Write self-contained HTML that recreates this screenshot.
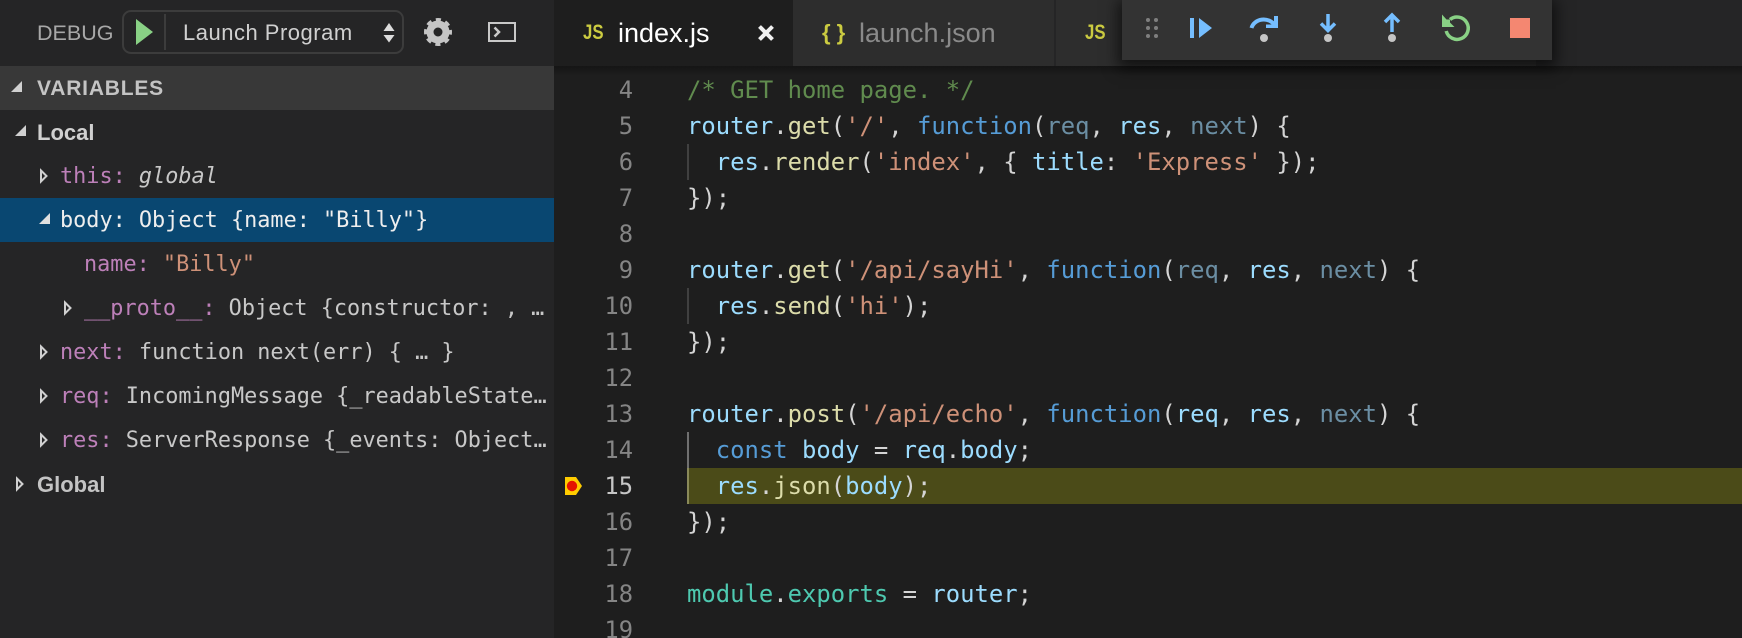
<!DOCTYPE html>
<html><head><meta charset="utf-8"><style>
html,body{margin:0;padding:0;background:#1e1e1e}
#r{position:relative;width:1742px;height:638px;overflow:hidden;background:#1e1e1e}
.a{position:absolute}
.s{font-family:"Liberation Sans",sans-serif;white-space:pre}
.m{font-family:"DejaVu Sans Mono","Liberation Mono",monospace;white-space:pre}
.row{position:absolute;font-size:21.85px;line-height:44px;height:44px;color:#c8c8c8;margin-top:1px}
.row i{font-style:normal;color:#bd80b9}
.l{position:absolute;left:687px;font-size:23.88px;line-height:36px;height:36px;color:#d4d4d4}
.n{position:absolute;left:583px;width:50px;text-align:right;font-size:23.76px;line-height:36px;color:#858585}
.v{color:#9cdcfe}.f{color:#dcdcaa}.t{color:#ce9178}.k{color:#569cd6}.d{color:#6b8ea3}.c{color:#608b4e}.e{color:#4ec9b0}
svg{position:absolute;overflow:visible}
.js{font-size:21px;line-height:26px;font-weight:bold;color:#cbcb41;transform:scaleX(.8);transform-origin:0 50%}
</style></head><body><div id="r">
<div class="a" style="left:0;top:0;width:554px;height:638px;background:#252526"></div>
<div class="a" style="left:0;top:66px;width:554px;height:44px;background:#383838"></div>
<div class="a" style="left:0;top:198px;width:554px;height:44px;background:#094771"></div>

<div class="a s" style="left:37px;top:19px;font-size:21.5px;line-height:28px;color:#a8a8a8">DEBUG</div>
<div class="a" style="left:122px;top:10px;width:278px;height:40px;border:2px solid #3c3c3c;border-radius:9px"></div>
<svg style="left:0;top:0" width="554" height="66">
<path d="M136 19L153 32L136 45Z" fill="#89d185"/>
<rect x="164" y="14" width="2" height="36" fill="#3c3c3c"/>
<path d="M389 23L394.500 31H383.500Z M383.500 35H394.500L389 42.500Z" fill="#dcdcdc"/>
<circle cx="438" cy="32" r="8" fill="none" stroke="#c5c5c5" stroke-width="7"/>
<circle cx="438" cy="32" r="12" fill="none" stroke="#c5c5c5" stroke-width="4" stroke-dasharray="5 4.425" stroke-dashoffset="2.500"/>
<rect x="489" y="23" width="26" height="18" fill="none" stroke="#c8c8c8" stroke-width="2"/>
<path d="M494.500 27.500L499 32L494.500 36.500" fill="none" stroke="#c8c8c8" stroke-width="2.500"/>
</svg>
<div class="a s" style="left:183px;top:19px;font-size:22px;line-height:28px;color:#d0d0d0;letter-spacing:.5px">Launch Program</div>

<div class="a s" style="left:37px;top:67px;font-size:21px;line-height:44px;font-weight:bold;color:#c4c4c4;letter-spacing:.8px">VARIABLES</div>
<div class="a s" style="left:37px;top:111px;font-size:22px;line-height:44px;font-weight:bold;color:#d0d0d0">Local</div>
<div class="a s" style="left:37px;top:463px;font-size:22px;line-height:44px;font-weight:bold;color:#c4c4c4">Global</div>

<svg style="left:0;top:0" width="554" height="520">
<path d="M11 92H22V81Z" fill="#d0d0d0"/>
<path d="M15 136H26V125Z" fill="#d0d0d0"/>
<path d="M39 224H50V213Z" fill="#e0e0e0"/>
<g fill="none" stroke="#d0d0d0" stroke-width="2">
<path d="M41 170.500L46.500 176L41 181.500Z"/>
<path d="M65 302.500L70.500 308L65 313.500Z"/>
<path d="M41 346.500L46.500 352L41 357.500Z"/>
<path d="M41 390.500L46.500 396L41 401.500Z"/>
<path d="M41 434.500L46.500 440L41 445.500Z"/>
<path d="M17 478.500L22.500 484L17 489.500Z"/>
</g>
</svg>

<div class="row m" style="left:60px;top:154px"><i>this:</i> <span style="font-style:italic">global</span></div>
<div class="row m" style="left:60px;top:198px;color:#eee">body: Object {name: "Billy"}</div>
<div class="row m" style="left:84px;top:242px"><i>name:</i> <span style="color:#ce9178">"Billy"</span></div>
<div class="row m" style="left:84px;top:286px"><i>__proto__:</i> Object {constructor: , …</div>
<div class="row m" style="left:60px;top:330px"><i>next:</i> function next(err) { … }</div>
<div class="row m" style="left:60px;top:374px"><i>req:</i> IncomingMessage {_readableState…</div>
<div class="row m" style="left:60px;top:418px"><i>res:</i> ServerResponse {_events: Object…</div>

<div class="a" style="left:554px;top:0;width:1188px;height:66px;background:#252526"></div>
<div class="a" style="left:554px;top:66px;width:1188px;height:10px;background:linear-gradient(#151515,#1e1e1e)"></div>
<div class="a" style="left:554px;top:0;width:239px;height:66px;background:#1e1e1e"></div>
<div class="a" style="left:793px;top:0;width:261px;height:66px;background:#2d2d2d"></div>
<div class="a" style="left:1056px;top:0;width:480px;height:66px;background:#2d2d2d"></div>

<div class="a s js" style="left:583px;top:20px">JS</div>
<div class="a s" style="left:618px;top:17px;font-size:27px;line-height:32px;color:#fff">index.js</div>
<svg style="left:758px;top:25px" width="16" height="16"><path d="M1.500 1.500L14.500 14.500M14.500 1.500L1.500 14.500" stroke="#f0f0f0" stroke-width="4"/></svg>
<div class="a s" style="left:822px;top:18px;font-size:22px;line-height:30px;font-weight:bold;color:#cbcb41">{ }</div>
<div class="a s" style="left:859px;top:17px;font-size:27px;line-height:32px;color:#8a8a8a">launch.json</div>
<div class="a s js" style="left:1085px;top:20px">JS</div>

<div class="a" style="left:687px;top:144px;width:2px;height:36px;background:#404040"></div>
<div class="a" style="left:687px;top:288px;width:2px;height:36px;background:#404040"></div>
<div class="a" style="left:687px;top:432px;width:2px;height:36px;background:#707070"></div>
<div class="a" style="left:687px;top:468px;width:1055px;height:36px;background:#4b4b18"></div>
<div class="a" style="left:687px;top:468px;width:2px;height:36px;background:#8a8a5a"></div>
<svg style="left:565px;top:477px" width="18" height="18"><path d="M0 0H11L17 9L11 18H0Z" fill="#ffcc00"/><circle cx="7" cy="9" r="5.200" fill="#e51400"/></svg>

<div class="n m" style="top:72px">4</div><div class="n m" style="top:108px">5</div><div class="n m" style="top:144px">6</div><div class="n m" style="top:180px">7</div><div class="n m" style="top:216px">8</div><div class="n m" style="top:252px">9</div><div class="n m" style="top:288px">10</div><div class="n m" style="top:324px">11</div><div class="n m" style="top:360px">12</div><div class="n m" style="top:396px">13</div><div class="n m" style="top:432px">14</div><div class="n m" style="top:468px;color:#c6c6c6">15</div><div class="n m" style="top:504px">16</div><div class="n m" style="top:540px">17</div><div class="n m" style="top:576px">18</div><div class="n m" style="top:612px">19</div>

<div class="l m c" style="top:72px">/* GET home page. */</div>
<div class="l m" style="top:108px"><span class="v">router</span>.<span class="f">get</span>(<span class="t">'/'</span>, <span class="k">function</span>(<span class="d">req</span>, <span class="v">res</span>, <span class="d">next</span>) {</div>
<div class="l m" style="top:144px">  <span class="v">res</span>.<span class="f">render</span>(<span class="t">'index'</span>, { <span class="v">title</span>: <span class="t">'Express'</span> });</div>
<div class="l m" style="top:180px">});</div>
<div class="l m" style="top:252px"><span class="v">router</span>.<span class="f">get</span>(<span class="t">'/api/sayHi'</span>, <span class="k">function</span>(<span class="d">req</span>, <span class="v">res</span>, <span class="d">next</span>) {</div>
<div class="l m" style="top:288px">  <span class="v">res</span>.<span class="f">send</span>(<span class="t">'hi'</span>);</div>
<div class="l m" style="top:324px">});</div>
<div class="l m" style="top:396px"><span class="v">router</span>.<span class="f">post</span>(<span class="t">'/api/echo'</span>, <span class="k">function</span>(<span class="v">req</span>, <span class="v">res</span>, <span class="d">next</span>) {</div>
<div class="l m" style="top:432px">  <span class="k">const</span> <span class="v">body</span> = <span class="v">req</span>.<span class="v">body</span>;</div>
<div class="l m" style="top:468px">  <span class="v">res</span>.<span class="f">json</span>(<span class="v">body</span>);</div>
<div class="l m" style="top:504px">});</div>
<div class="l m" style="top:576px"><span class="e">module</span>.<span class="e">exports</span> = <span class="v">router</span>;</div>

<div class="a" style="left:1122px;top:0;width:430px;height:60px;background:#333;box-shadow:0 4px 14px 4px rgba(0,0,0,.6)"></div>
<svg style="left:0;top:0" width="1742" height="60">
<g fill="#7f7f7f"><circle cx="1148" cy="20" r="2"/><circle cx="1156" cy="20" r="2"/><circle cx="1148" cy="28" r="2"/><circle cx="1156" cy="28" r="2"/><circle cx="1148" cy="36" r="2"/><circle cx="1156" cy="36" r="2"/></g>
<path d="M1190 18h4v20h-4z M1199 18L1212 28L1199 38Z" fill="#75beff"/>
<path d="M1251.500 28a12.500 11 0 0 1 23 -3" fill="none" stroke="#75beff" stroke-width="4"/>
<path d="M1278 16v12h-12l0 -3.500h8v-8.500z" fill="#75beff"/>
<circle cx="1264" cy="38" r="4" fill="#c5c5c5"/>
<path d="M1328 14v17M1321 23.500l7 7 7-7" fill="none" stroke="#75beff" stroke-width="3.500"/>
<circle cx="1328" cy="38" r="4" fill="#c5c5c5"/>
<path d="M1392 32v-17M1385 22l7-7 7 7" fill="none" stroke="#75beff" stroke-width="3.500"/>
<circle cx="1392" cy="38" r="4" fill="#c5c5c5"/>
<path d="M1450 19.500A11.200 11.200 0 1 1 1446.200 31" fill="none" stroke="#89d185" stroke-width="3.500"/>
<path d="M1442 14.500V27H1454.500L1450 22.500L1450 19.500L1446.500 19.500Z" fill="#89d185"/>
<rect x="1510" y="18" width="20" height="20" fill="#f48771"/>
</svg>
</div></body></html>
